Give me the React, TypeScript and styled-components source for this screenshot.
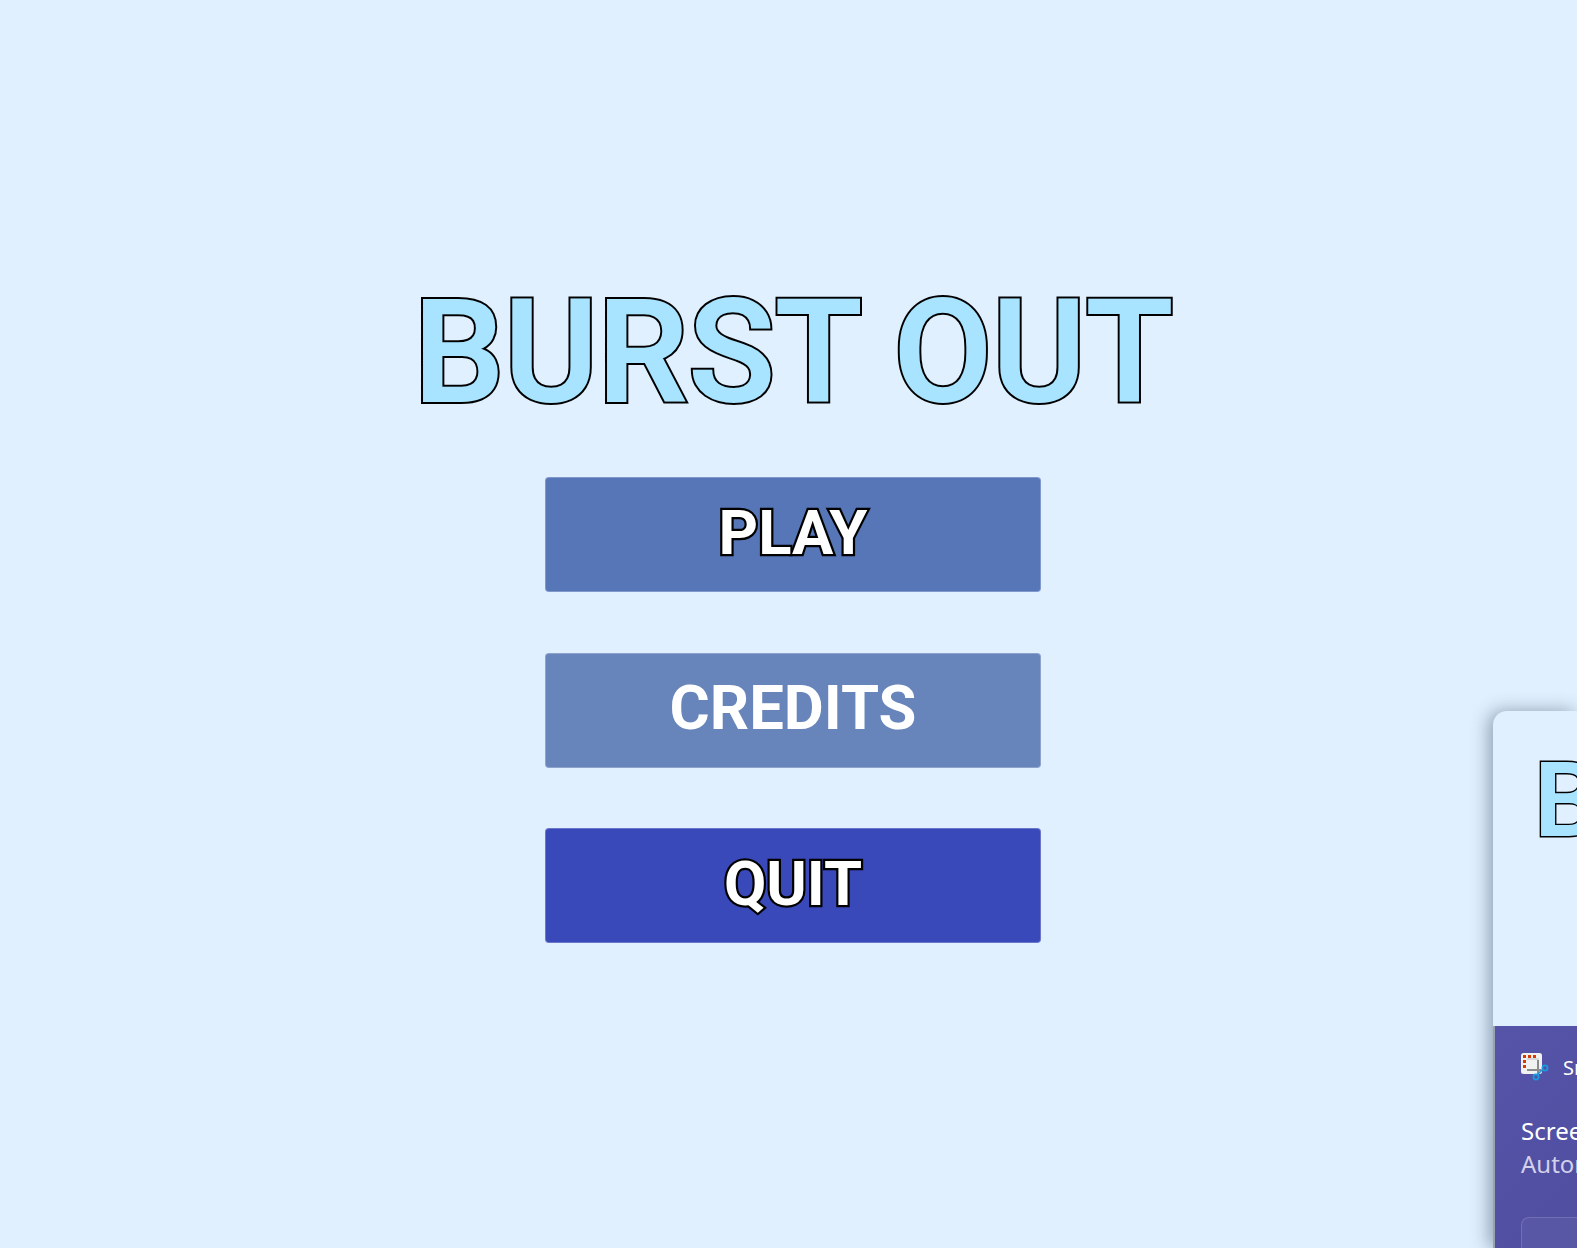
import React from 'react'
import styled, { createGlobalStyle } from 'styled-components'

const GlobalStyle = createGlobalStyle`
  html, body {
    margin: 0;
    height: 100%;
    overflow: hidden;
    background: #e0f0fe;
    font-family: Roboto, "Liberation Sans", sans-serif;
  }
`

const Page = styled.main`
  height: 1248px;
  box-sizing: border-box;
  padding: 278px 0 0 9px;
  display: flex;
  flex-direction: column;
  align-items: center;
`

const Title = styled.h1`
  margin: 0 0 49px;
  font-size: 144px;
  line-height: 150px;
  font-weight: 600;
  letter-spacing: -1px;
  color: #a8e4ff;
  -webkit-text-stroke: 4px #000;
  paint-order: stroke fill;
  white-space: nowrap;
`

const Menu = styled.nav`
  display: flex;
  flex-direction: column;
  gap: 60.5px;
`

const MenuButton = styled.button<{ $bg: string; $outlined?: boolean }>`
  width: 496px;
  height: 115px;
  padding: 0 0 4px;
  border: 1px solid rgba(255, 255, 255, 0.25);
  border-radius: 4px;
  background: ${props => props.$bg};
  color: #fff;
  font-family: Roboto, "Liberation Sans", sans-serif;
  font-size: 61.5px;
  font-weight: 700;
  -webkit-text-stroke: ${props => (props.$outlined ? '4.5px #000' : '0')};
  paint-order: stroke fill;
`

const Toast = styled.aside`
  position: absolute;
  left: 1493px;
  top: 711px;
  right: 0;
  bottom: 0;
  border-radius: 14px 0 0 0;
  background: #e0f0fe;
  overflow: hidden;
  box-shadow: -4px 0 18px rgba(40, 60, 90, 0.45);
`

const Preview = styled.div`
  height: 315px;
  box-sizing: border-box;
  padding: 35px 0 0 41px;
  font-size: 104px;
  line-height: 110px;
  font-weight: 600;
  color: #a8e4ff;
  -webkit-text-stroke: 2.8px #000;
  paint-order: stroke fill;
  white-space: nowrap;
`

const Notice = styled.div`
  height: 222px;
  width: 400px;
  box-sizing: border-box;
  padding: 27px 26px;
  border-left: 2px solid #9aa3ad;
  background: linear-gradient(135deg, #5654a8 0%, #474798 100%);
  color: #fff;
  font-family: "Noto Sans", "Open Sans", sans-serif;
`

const AppRow = styled.div`
  display: flex;
  align-items: center;
  gap: 14px;
  font-size: 20px;
  margin-bottom: 33px;
`

const Message = styled.p`
  margin: 0;
  font-size: 24px;
  line-height: 33px;
  white-space: nowrap;
`

const Secondary = styled.span`
  display: block;
  color: #d3d2ea;
`

const ActionButton = styled.div`
  width: 200px;
  height: 50px;
  margin-top: 37px;
  border: 1px solid rgba(255, 255, 255, 0.14);
  border-radius: 8px;
  background: rgba(255, 255, 255, 0.05);
`

const SnipIcon = () => (
  <svg width="28" height="28" viewBox="0 0 28 28" fill="none">
    <rect x="0" y="0" width="21" height="21" rx="2.5" fill="#f1f1f1" />
    <g fill="#d83b01">
      <rect x="2" y="2" width="3" height="3" />
      <rect x="7" y="2" width="3" height="3" />
      <rect x="12" y="2" width="3" height="3" />
      <rect x="2" y="7" width="3" height="3" />
      <rect x="2" y="12" width="3" height="3" />
    </g>
    <path d="M6 6H17V17H6" stroke="#cfcfcf" strokeWidth="1.5" />
    <path d="M17 7V22M6 17H20" stroke="#8c8c8c" strokeWidth="2" />
    <circle cx="24" cy="15" r="2.6" stroke="#1a9be0" strokeWidth="1.7" />
    <circle cx="15" cy="24" r="2.6" stroke="#1a9be0" strokeWidth="1.7" />
    <path d="M17 21L22 16" stroke="#1a9be0" strokeWidth="1.7" />
  </svg>
)

const App = () => (
  <>
    <GlobalStyle />
    <Page>
      <Title>BURST OUT</Title>
      <Menu>
        <MenuButton $bg="#5676b8" $outlined>PLAY</MenuButton>
        <MenuButton $bg="#6784bb">CREDITS</MenuButton>
        <MenuButton $bg="#3a49ba" $outlined>QUIT</MenuButton>
      </Menu>
    </Page>
    <Toast>
      <Preview>BURST OUT</Preview>
      <Notice>
        <AppRow>
          <SnipIcon />
          Snipping Tool
        </AppRow>
        <Message>
          Screenshot copied to clipboard
          <Secondary>Automatically saved to screenshots folder</Secondary>
        </Message>
        <ActionButton />
      </Notice>
    </Toast>
  </>
)

export default App
